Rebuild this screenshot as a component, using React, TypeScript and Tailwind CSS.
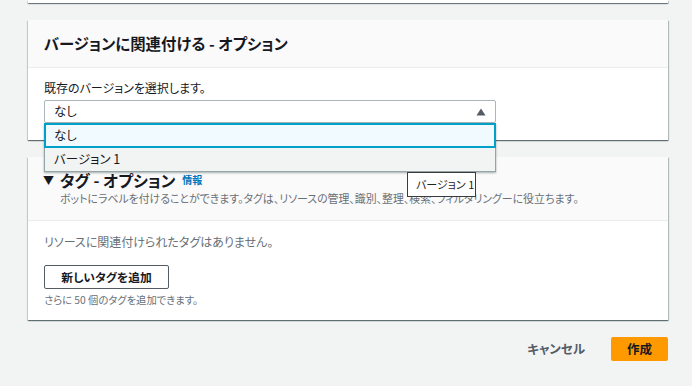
import React from "react";

const shadow =
  "shadow-[0_1px_1px_0_rgba(0,28,36,0.45),1px_1px_1px_0_rgba(0,28,36,0.2),-1px_1px_1px_0_rgba(0,28,36,0.12)]";

export default function App() {
  return (
    <div
      className="w-[692px] h-[386px] bg-[#f2f3f3] overflow-hidden relative [font-feature-settings:'palt'] text-[#16191f]"
      style={{ fontFamily: '"Noto Sans CJK JP", "Noto Sans", sans-serif' }}
    >
      <div className="pl-[28px] w-[668px]">
        {/* previous card tail */}
        <div className={`h-[3px] bg-white ${shadow}`} />

        {/* card 1 */}
        <div className={`mt-[17px] bg-white ${shadow}`}>
          <div className="h-[48px] bg-[#fafafa] border-b border-[#eaeded] flex items-center px-[16px]">
            <h2 className="text-[15.4px] font-bold leading-none">バージョンに関連付ける - オプション</h2>
          </div>
          <div className="px-[16px] pt-[12px] pb-[17px]">
            <div className="text-[12px] leading-[16px] text-[#16191f]">既存のバージョンを選択します。</div>
            <div className="relative mt-[4px] w-[452px]">
              <div className="h-[23px] border border-[#aab7b8] rounded-[2px] bg-white flex items-center justify-between pl-[9px] pr-[9px]">
                <span className="text-[12.5px]">なし</span>
                <svg width="10" height="8" viewBox="0 0 10 8">
                  <path d="M5 0.5 L9.5 7.5 L0.5 7.5 Z" fill="#545b64" />
                </svg>
              </div>
              {/* dropdown */}
              <div className="absolute left-0 top-[23px] w-[452px] z-10 shadow-[0_1px_2px_rgba(0,28,36,0.35)]">
                <div className="h-[25px] border-2 border-[#00a1c9] bg-[#f1faff] flex items-center pl-[8px] text-[12.5px]">
                  なし
                </div>
                <div className="h-[24px] border border-t-0 border-[#95a5a6] bg-[#f2f3f3] flex items-center pl-[9px] text-[12.5px]">
                  バージョン 1
                </div>
              </div>
              {/* native tooltip */}
              <div className="absolute left-[363px] top-[72px] w-[69px] h-[25px] z-20 bg-white border border-[#3b3b3b] flex items-center pl-[8px] text-[11px] text-[#222] whitespace-nowrap">
                バージョン 1
              </div>
            </div>
          </div>
        </div>

        {/* card 2 */}
        <div className={`mt-[17px] bg-white ${shadow}`}>
          <div className="h-[64px] bg-[#fafafa] border-b border-[#eaeded] px-[16px] pt-[12px]">
            <div className="flex items-center h-[22px]">
              <span className="text-[11px] mr-[6px] ml-[-1px]">▼</span>
              <h2 className="text-[16px] font-bold leading-none">タグ - オプション</h2>
              <span className="ml-[7px] text-[10px] font-bold text-[#0073bb] leading-none">情報</span>
            </div>
            <div className="pl-[16px] text-[10.9px] leading-[14px] text-[#687078] whitespace-nowrap">
              ボットにラベルを付けることができます。タグは、リソースの管理、識別、整理、検索、フィルタリングーに役立ちます。
            </div>
          </div>
          <div className="px-[16px] pt-[12px] pb-[14px]">
            <div className="text-[12px] leading-[17px] text-[#687078]">リソースに関連付けられたタグはありません。</div>
            <button className="mt-[15px] h-[24px] w-[125px] border border-[#545b64] rounded-[2px] bg-white text-[11.75px] font-bold text-[#16191f] flex items-center justify-center">
              新しいタグを追加
            </button>
            <div className="mt-[4px] text-[10.3px] leading-[13px] text-[#687078]">さらに 50 個のタグを追加できます。</div>
          </div>
        </div>

        {/* footer */}
        <div className="mt-[17px] flex justify-end items-center">
          <span className="text-[12.5px] font-bold text-[#545b64] mr-[26px]">キャンセル</span>
          <button className="h-[24px] w-[57px] bg-[#ff9900] rounded-[2px] text-[12.5px] font-bold text-[#16191f] flex items-center justify-center">
            作成
          </button>
        </div>
      </div>
    </div>
  );
}
